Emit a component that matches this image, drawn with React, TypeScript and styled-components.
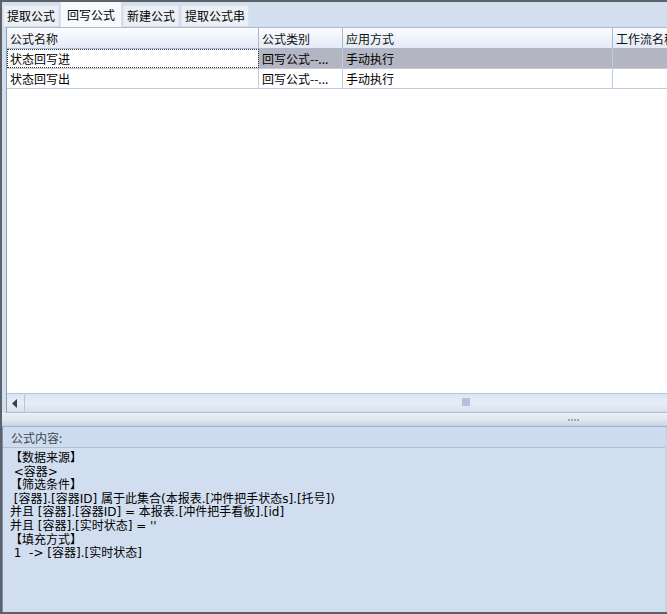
import React from "react";
import styled, { createGlobalStyle } from "styled-components";

const GlobalStyle = createGlobalStyle`
  html, body {
    margin: 0;
    padding: 0;
    background: #5d6168;
  }
  body {
    font-family: "Noto Sans CJK SC", "Liberation Sans", sans-serif;
    font-size: 12px;
    color: #000;
  }
`;

interface Formula {
  id: number;
  name: string;
  kind: string;
  mode: string;
  flow: string;
}

const formulas: Formula[] = [
  { id: 1, name: "状态回写进", kind: "回写公式--...", mode: "手动执行", flow: "" },
  { id: 2, name: "状态回写出", kind: "回写公式--...", mode: "手动执行", flow: "" },
];

const tabs = ["提取公式", "回写公式", "新建公式", "提取公式串"];

const columns = ["公式名称", "公式类别", "应用方式", "工作流名称"];

const content = `【数据来源】
 <容器>
【筛选条件】
 [容器].[容器ID] 属于此集合(本报表.[冲件把手状态s].[托号])
并且 [容器].[容器ID] = 本报表.[冲件把手看板].[id]
并且 [容器].[实时状态] = ''
【填充方式】
 1  -> [容器].[实时状态]`;

const App: React.FC = () => {
  return (
    <>
      <GlobalStyle />
      <Window>
        <TabStrip>
          {tabs.map((t, i) => (
            <Tab key={t} $active={i === 1}>
              {t}
            </Tab>
          ))}
        </TabStrip>
        <GridArea>
          <GridBox>
            <HeaderRow>
              {columns.map((c) => (
                <HeaderCell key={c}>{c}</HeaderCell>
              ))}
            </HeaderRow>
            {formulas.map((f, i) => (
              <Row key={f.id}>
                <Cell $focused={i === 0}>{f.name}</Cell>
                <Cell $selected={i === 0}>{f.kind}</Cell>
                <Cell $selected={i === 0}>{f.mode}</Cell>
                <Cell $selected={i === 0}>{f.flow}</Cell>
              </Row>
            ))}
            <Filler />
            <HScroll>
              <ArrowButton>
                <svg width="6" height="9" viewBox="0 0 6 9">
                  <path d="M5 0 L0 4.5 L5 9 Z" fill="#3a3f4a" />
                </svg>
              </ArrowButton>
              <Track>
                <Thumb />
              </Track>
            </HScroll>
          </GridBox>
        </GridArea>
        <Splitter>
          <Grip>
            {[0, 1, 2, 3].map((d) => (
              <Dot key={d} />
            ))}
          </Grip>
        </Splitter>
        <ContentPanel>
          <ContentHeader>公式内容:</ContentHeader>
          <ContentBody>{content}</ContentBody>
        </ContentPanel>
      </Window>
    </>
  );
};

export default App;

const Window = styled.div`
  width: 667px;
  height: 614px;
  box-sizing: border-box;
  padding: 2px 0 2px 2px;
  display: flex;
  flex-direction: column;
  background: #5d6168;
  overflow: hidden;
`;

const TabStrip = styled.div`
  height: 25px;
  flex: none;
  display: flex;
  align-items: flex-end;
  gap: 2px;
  padding: 0 0 0 1px;
  background: #d3deee;
`;

const Tab = styled.div<{ $active?: boolean }>`
  height: ${(p) => (p.$active ? "25px" : "21px")};
  box-sizing: border-box;
  padding: 0 ${(p) => (p.$active ? "5px" : "3px")};
  display: flex;
  align-items: center;
  font-size: 12px;
  line-height: 14px;
  color: #000;
  background: ${(p) => (p.$active ? "#f7f9fd" : "#eceff4")};
  border: 1px solid ${(p) => (p.$active ? "#f7f9fd" : "#dde3ec")};
  border-bottom: none;
  margin-bottom: ${(p) => (p.$active ? "0" : "1px")};
`;

const GridArea = styled.div`
  flex: none;
  height: 386px;
  padding-left: 4px;
  background: #d3deee;
  display: flex;
`;

const GridBox = styled.div`
  flex: 1;
  display: flex;
  flex-direction: column;
  background: #fff;
  border-left: 1px solid #8c9fbb;
  border-top: 1px solid #a9bbd4;
  overflow: hidden;
`;

const gridCols = "252px 84px 270px 90px";

const HeaderRow = styled.div`
  display: grid;
  grid-template-columns: ${gridCols};
  height: 20px;
  flex: none;
  background: linear-gradient(#fbfcfe, #e4ebf6);
  border-bottom: 1px solid #a8bad3;
`;

const HeaderCell = styled.div`
  box-sizing: border-box;
  padding-left: 3px;
  display: flex;
  align-items: center;
  border-right: 1px solid #a8bad3;
  color: #111;
  white-space: nowrap;
  overflow: hidden;
`;

const Row = styled.div`
  display: grid;
  grid-template-columns: ${gridCols};
  height: 19px;
  flex: none;
  border-bottom: 1px solid #c6c8de;
`;

const Cell = styled.div<{ $selected?: boolean; $focused?: boolean }>`
  box-sizing: border-box;
  padding-left: 3px;
  display: flex;
  align-items: center;
  white-space: nowrap;
  overflow: hidden;
  border-right: 1px solid #c6c8de;
  background: ${(p) => (p.$selected ? "#b3b6c2" : "#fff")};
  outline: ${(p) => (p.$focused ? "1px dotted #333" : "none")};
  outline-offset: -1px;
`;

const Filler = styled.div`
  flex: 1;
`;

const HScroll = styled.div`
  height: 18px;
  flex: none;
  display: flex;
  background: linear-gradient(#dbe5f3, #e7eef8 50%, #d6e1f0);
  border-top: 1px solid #b4c6de;
  border-bottom: 1px solid #a9bcd6;
`;

const ArrowButton = styled.div`
  width: 15px;
  display: flex;
  align-items: center;
  justify-content: center;
  padding-right: 2px;
`;

const Track = styled.div`
  flex: 1;
  position: relative;
  border-left: 1px solid #b4c6de;
  border-radius: 2px 0 0 2px;
`;

const Thumb = styled.div`
  position: absolute;
  left: 437px;
  top: 4px;
  width: 8px;
  height: 8px;
  background: #b3c2d8;
`;

const Splitter = styled.div`
  height: 12px;
  flex: none;
  display: flex;
  justify-content: flex-end;
  align-items: center;
  padding-right: 88px;
  background: linear-gradient(#e9edf3, #e1e6ee 50%, #c4d2e6);
  border-top: 1px solid #f4f6f9;
  border-bottom: 1px solid #9fb3cf;
`;

const Grip = styled.div`
  display: flex;
  gap: 1px;
`;

const Dot = styled.span`
  width: 2px;
  height: 2px;
  background: #9aa9bf;
`;

const ContentPanel = styled.div`
  flex: 1;
  display: flex;
  flex-direction: column;
  background: #d1deef;
  border-left: 1px solid #7f90a8;
  border-right: 2px solid #c8d4e4;
`;

const ContentHeader = styled.div`
  height: 20px;
  flex: none;
  display: flex;
  align-items: center;
  padding-left: 8px;
  color: #3f4650;
  background: #cedcf0;
  border-bottom: 1px solid #aebfd6;
`;

const ContentBody = styled.div`
  flex: 1;
  padding: 4px 0 0 7px;
  white-space: pre;
  font-family: "DejaVu Sans", "Noto Sans CJK SC", sans-serif;
  font-size: 12px;
  line-height: 13.6px;
  color: #000;
`;
